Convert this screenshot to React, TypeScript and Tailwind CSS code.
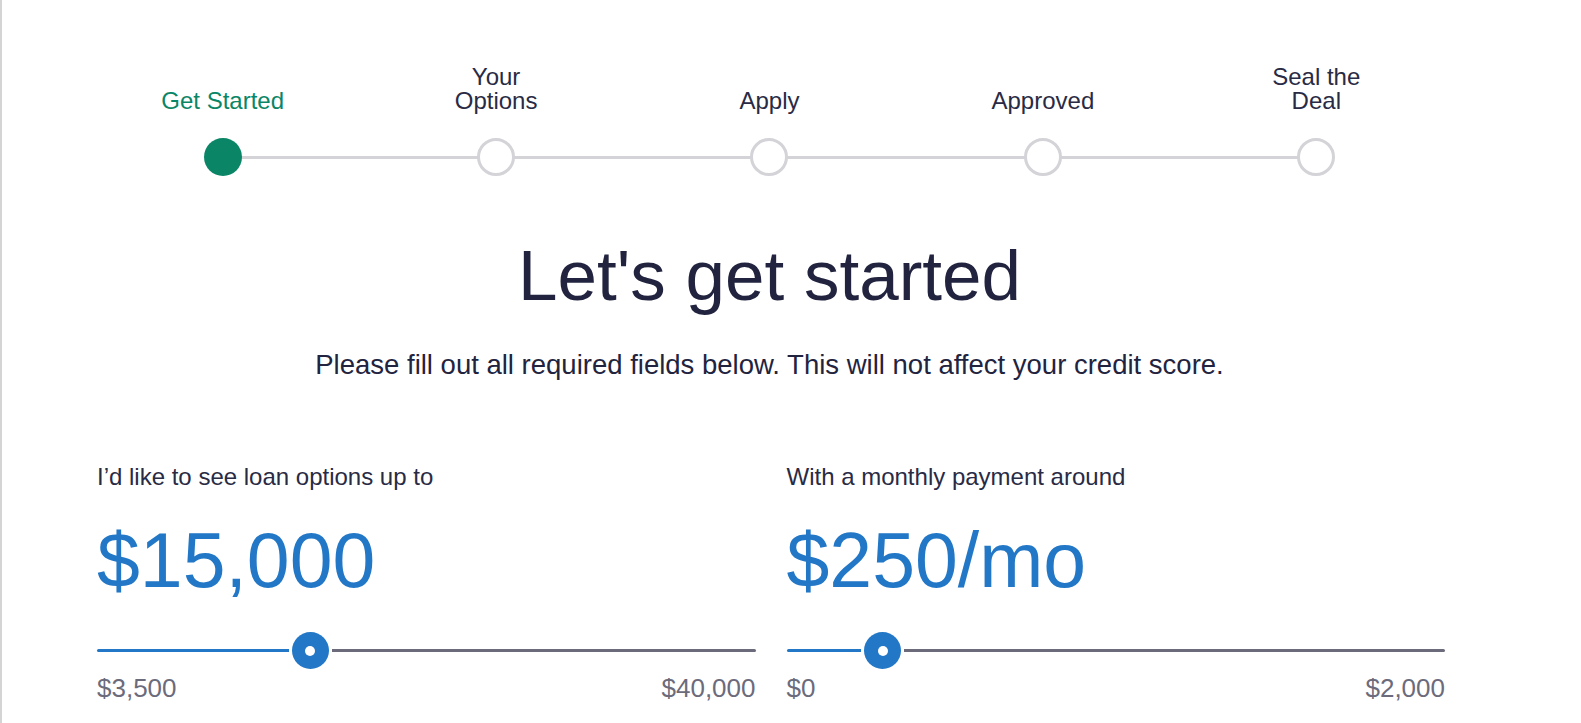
import React from 'react';

const steps = [
  {lines: ['Get Started'], active: true},
  {lines: ['Your', 'Options']},
  {lines: ['Apply']},
  {lines: ['Approved']},
  {lines: ['Seal the', 'Deal']},
];

function Stepper() {
  return (
    <div className="w-full">
      <div className="grid grid-cols-5 items-end">
        {steps.map((s) => (
          <div
            key={s.lines.join(' ')}
            className={`flex flex-col items-center text-[24px] leading-6 ${s.active ? 'text-[#0a8667]' : 'text-[#292b45]'}`}
          >
            {s.lines.map((l) => (
              <span key={l}>{l}</span>
            ))}
          </div>
        ))}
      </div>
      <div className="relative mt-[25px] grid grid-cols-5">
        <div className="absolute left-[137px] right-[137px] top-[18px] h-[3px] bg-[#d3d3d8]" />
        {steps.map((s) => (
          <div key={s.lines.join(' ')} className="relative flex justify-center">
            {s.active ? (
              <div className="h-[38px] w-[38px] rounded-full bg-[#0a8667]" />
            ) : (
              <div className="h-[38px] w-[38px] rounded-full border-[3px] border-[#d3d3d8] bg-white" />
            )}
          </div>
        ))}
      </div>
    </div>
  );
}

function Slider({
  label,
  display,
  value,
  min,
  max,
  minLabel,
  maxLabel,
}: {
  label: string;
  display: string;
  value: number;
  min: number;
  max: number;
  minLabel: string;
  maxLabel: string;
}) {
  const pct = (value - min) / (max - min);
  return (
    <div className="flex flex-col">
      <span className="text-[24px] leading-6 text-[#292b45]">{label}</span>
      <span className="mt-[33px] text-[77px] leading-none text-[#2277c6]">{display}</span>
      <div className="mt-[33px] flex h-[38px] items-center gap-[3px]">
        <div className="h-[3px] shrink-0 rounded-l-full bg-[#2277c6]" style={{width: `calc((100% - 43px) * ${pct} - 2px)`}} />
        <div className="flex h-[37px] w-[37px] shrink-0 items-center justify-center rounded-full bg-[#2277c6]">
          <div className="h-[10px] w-[10px] rounded-full bg-white" />
        </div>
        <div className="h-[3px] flex-1 rounded-r-full bg-[#6b6b7c]" />
      </div>
      <div className="mt-[5px] flex justify-between text-[26px] leading-none text-[#6b6b7c]">
        <span>{minLabel}</span>
        <span>{maxLabel}</span>
      </div>
    </div>
  );
}

export default function App() {
  return (
    <div
      className="min-h-screen border-l-2 border-[#d4d4d4] bg-white"
      style={{fontFamily: '"Liberation Sans", Arial, sans-serif'}}
    >
      <div className="ml-[84px] w-[1367px] pt-[65px] pb-[28px]">
        <Stepper />
        <h1 className="mt-[64px] text-center text-[71px] leading-none font-normal text-[#22243f]">
          Let's get started
        </h1>
        <p className="mt-[40px] text-center text-[27.5px] leading-none text-[#22243f]">
          Please fill out all required fields below. This will not affect your credit score.
        </p>
        <div className="mt-[86px] grid grid-cols-2 gap-[31px] pl-[11px] pr-[8px]">
          <Slider
            label="I’d like to see loan options up to"
            display="$15,000"
            value={15000}
            min={3500}
            max={40000}
            minLabel="$3,500"
            maxLabel="$40,000"
          />
          <Slider
            label="With a monthly payment around"
            display="$250/mo"
            value={250}
            min={0}
            max={2000}
            minLabel="$0"
            maxLabel="$2,000"
          />
        </div>
      </div>
    </div>
  );
}
